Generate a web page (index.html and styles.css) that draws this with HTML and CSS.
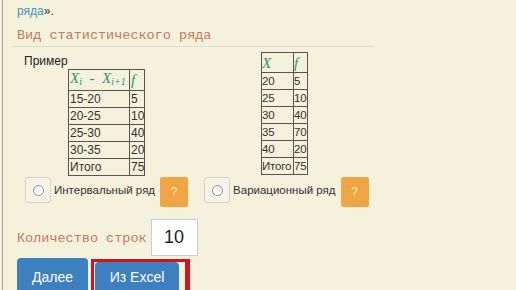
FILE: index.html
```html
<!DOCTYPE html>
<html lang="ru">
<head>
  <meta charset="UTF-8" />
  <title>Вид статистического ряда</title>
  <link rel="stylesheet" href="styles.css">
</head>
<body>
  <div class="page">
    <p class="lead"><a href="#">ряда</a>».</p>

    <h3 class="title">Вид статистического ряда</h3>

    <div class="examples">
      <div class="example-left">
        <div class="caption">Пример</div>
        <table class="series interval">
          <tr><th><i>X<sub>i</sub></i> &nbsp;- &nbsp;<i>X<sub>i+1</sub></i></th><th><i>f</i></th></tr>
          <tr><td>15-20</td><td>5</td></tr>
          <tr><td>20-25</td><td>10</td></tr>
          <tr><td>25-30</td><td>40</td></tr>
          <tr><td>30-35</td><td>20</td></tr>
          <tr><td>Итого</td><td>75</td></tr>
        </table>
      </div>
      <table class="series variation">
        <tr><th><i>X</i></th><th><i>f</i></th></tr>
        <tr><td>20</td><td>5</td></tr>
        <tr><td>25</td><td>10</td></tr>
        <tr><td>30</td><td>40</td></tr>
        <tr><td>35</td><td>70</td></tr>
        <tr><td>40</td><td>20</td></tr>
        <tr><td>Итого</td><td>75</td></tr>
      </table>
    </div>

    <div class="choices">
      <label class="choice first">
        <span class="radio"><span class="dot"></span></span>
        <span class="choice-text">Интервальный ряд</span>
      </label>
      <button class="help">?</button>
      <label class="choice second">
        <span class="radio"><span class="dot"></span></span>
        <span class="choice-text">Вариационный ряд</span>
      </label>
      <button class="help">?</button>
    </div>

    <div class="rows-count">
      <span class="label">Количество строк</span>
      <input class="count" type="text" value="10">
    </div>

    <div class="actions">
      <button class="btn next">Далее</button>
      <div class="highlight"><button class="btn">Из Excel</button></div>
    </div>
  </div>
</body>
</html>
```

FILE: styles.css
```css
body {
  margin: 0;
  background: #f4f1dc;
  font-family: 'Liberation Sans', Arial, sans-serif;
  font-size: 12px;
  color: #222;
  overflow: hidden;
}
.page {
  height: 290px;
  width: 510px;
  margin-left: 2px;
  border-left: 1px solid #a9a9a0;
  border-right: 2px solid #333;
  padding-left: 14px;
  box-sizing: content-box;
  overflow: hidden;
}
.lead {
  margin: 0;
  padding-top: 4px;
  height: 16px;
  line-height: 14px;
  color: #333;
}
.lead a {
  color: #4b8fc2;
  text-decoration: none;
}
.title {
  margin: 0 0 0 -5px;
  padding: 8px 0 2px 5px;
  width: 356px;
  height: 16px;
  line-height: 16px;
  font-family: 'Liberation Mono', 'Courier New', monospace;
  font-size: 13.5px;
  font-weight: normal;
  color: #c47a5e;
  border-bottom: 1px solid #e4e0c6;
}
.examples {
  display: flex;
  align-items: flex-start;
  height: 125px;
  margin-top: 5px;
}
.example-left {
  width: 244px;
}
.caption {
  margin: 3px 0 0 7px;
  height: 12px;
  line-height: 12px;
  font-size: 12px;
}
.series {
  border-collapse: collapse;
  font-size: 12px;
  color: #333;
}
.series td,
.series th {
  border: 1px solid #555;
  padding: 0 0 0 1px;
  height: 16px;
  line-height: 16px;
  text-align: left;
  font-weight: normal;
  white-space: nowrap;
}
.series th {
  height: 19px;
  font-family: 'Liberation Serif', serif;
  font-size: 15px;
  color: #2b9478;
}
.series th sub {
  font-size: 10px;
  vertical-align: -2px;
}
.interval {
  margin: 2px 0 0 51px;
}
.interval td:first-child,
.interval th:first-child {
  width: 59px;
}
.interval td:last-child,
.interval th:last-child {
  width: 13px;
}
.variation {
  table-layout: fixed;
  width: 46px;
  font-size: 11.5px;
  letter-spacing: -0.2px;
}
.variation td,
.variation th {
  padding: 0;
  overflow: visible;
}
.variation td:first-child,
.variation th:first-child {
  width: 31px;
}
.variation td:last-child,
.variation th:last-child {
  width: 13px;
}
.choices {
  display: flex;
  align-items: flex-start;
}
.choice {
  display: flex;
  align-items: center;
  height: 26px;
}
.first {
  margin-left: 8px;
}
.second {
  margin-left: 16px;
}
.radio {
  display: flex;
  align-items: center;
  justify-content: center;
  width: 24px;
  height: 24px;
  border: 1px solid #d6d3c4;
  border-radius: 3px;
  background: #f7f5ea;
}
.dot {
  width: 9px;
  height: 9px;
  border: 1.5px solid #8a8a8a;
  border-radius: 50%;
  background: #fff;
}
.choice-text {
  margin-left: 3px;
  font-size: 11.5px;
  color: #333;
}
.help {
  width: 28px;
  height: 30px;
  margin-left: 5px;
  border: none;
  border-radius: 2px;
  background: #f0a545;
  color: #fbe9a8;
  font-family: 'Liberation Sans', Arial, sans-serif;
  font-size: 12px;
  padding: 0;
}
.rows-count {
  display: flex;
  align-items: flex-end;
  margin-top: 12px;
}
.label {
  font-family: 'Liberation Mono', 'Courier New', monospace;
  font-size: 13.5px;
  color: #c47a5e;
  line-height: 16px;
  margin-bottom: 9px;
}
.count {
  width: 47px;
  height: 37px;
  margin-left: 4px;
  box-sizing: border-box;
  border: 1px solid #ccc;
  background: #fff;
  font-family: 'Liberation Sans', Arial, sans-serif;
  font-size: 18px;
  color: #222;
  text-align: center;
  padding: 0;
}
.actions {
  display: flex;
  align-items: flex-start;
  margin-top: 2px;
}
.btn {
  height: 36px;
  border: none;
  border-radius: 4px 4px 0 0;
  background: #3c80c0;
  color: #fff;
  font-family: 'Liberation Sans', Arial, sans-serif;
  font-size: 14px;
  line-height: 30px;
  padding: 0 0 6px;
}
.next {
  width: 71px;
  height: 40px;
  line-height: 38px;
  padding: 0 0 2px;
}
.highlight {
  margin: 1px 0 0 3px;
  width: 99px;
  height: 40px;
  border: 3px solid #d4131b;
  border-right-width: 5px;
  border-bottom: none;
  box-sizing: border-box;
}
.highlight .btn {
  margin-left: 1px;
  width: 84px;
}
```
